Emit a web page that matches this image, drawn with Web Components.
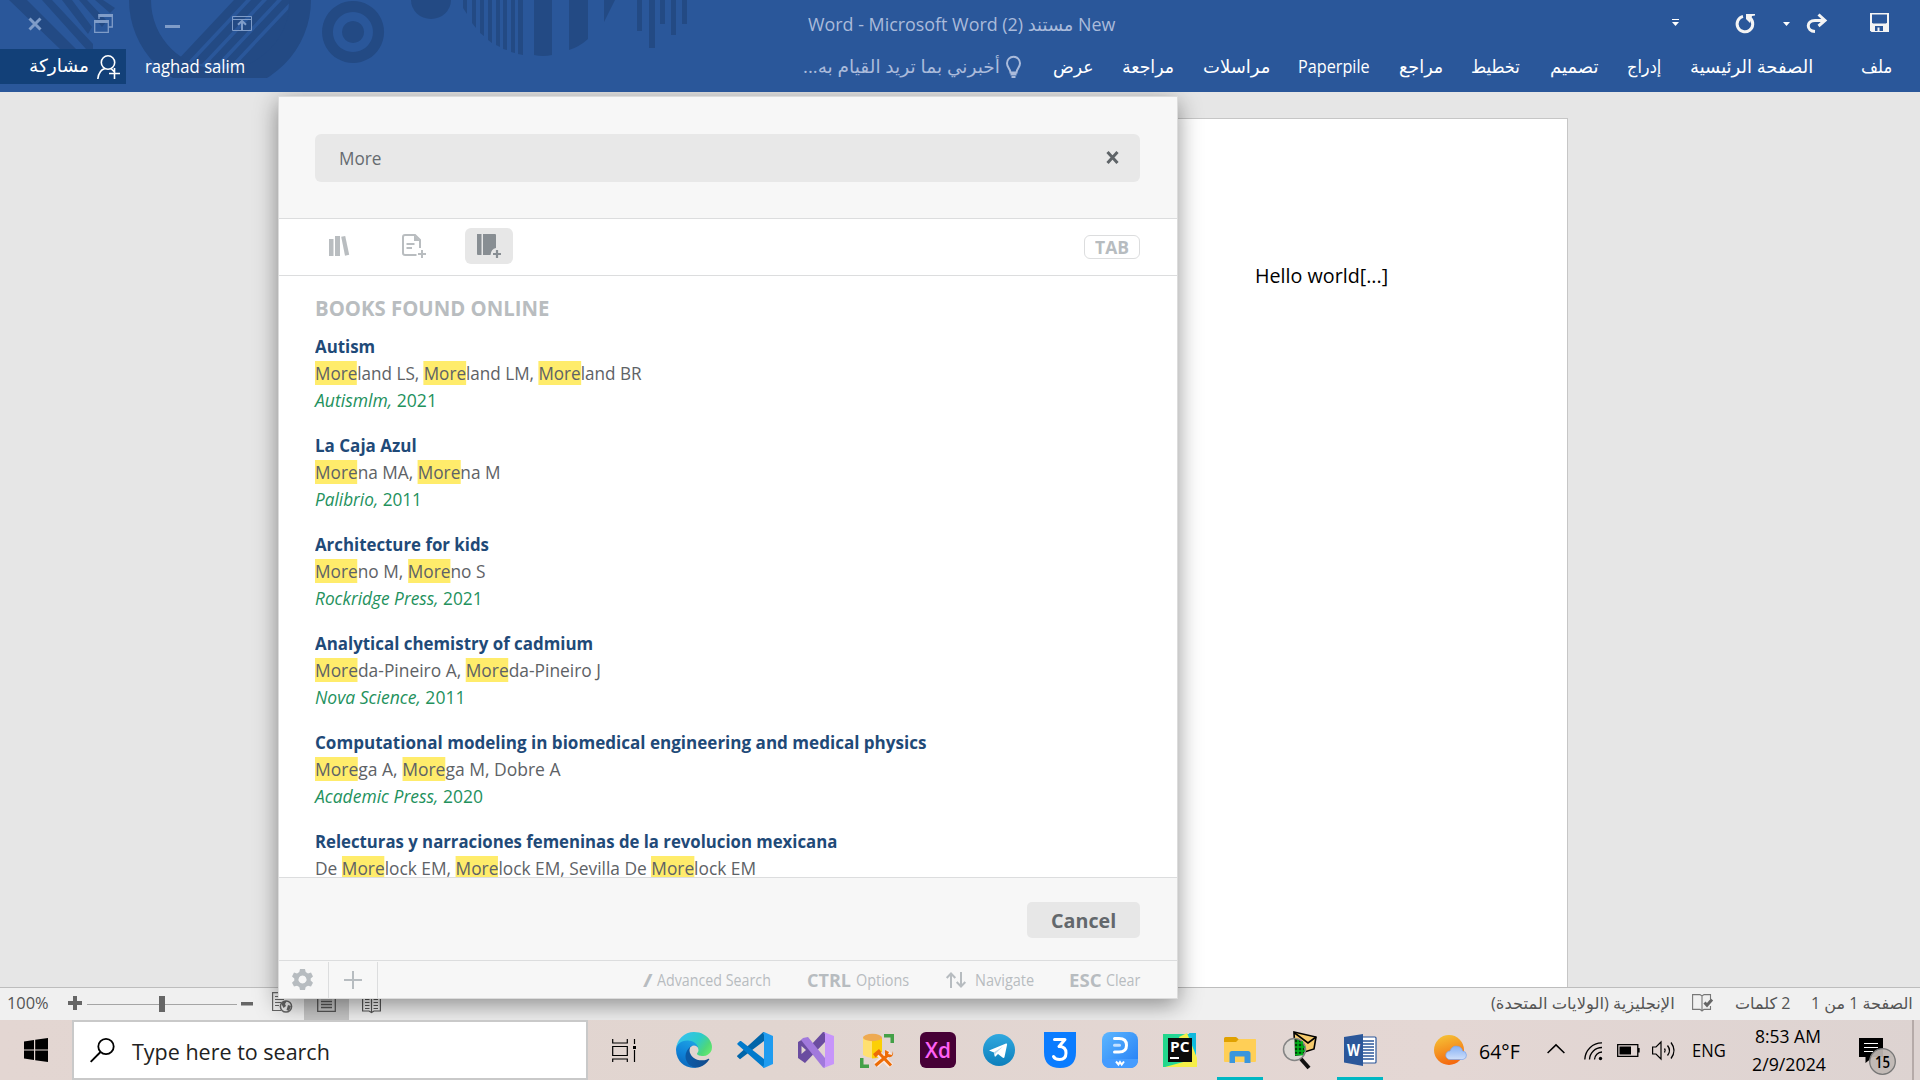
<!DOCTYPE html>
<html lang="ar">
<head>
<meta charset="utf-8">
<title>Word</title>
<style>
html,body{margin:0;padding:0}
body{width:1920px;height:1080px;overflow:hidden;font-family:"Open Sans","DejaVu Sans",sans-serif;background:#e6e6e6}
</style>
</head>
<body>
<desktop-screen></desktop-screen>
<script>
/* Single line of text set to a fixed measure: w = width, s = size, g = leading gap, dy = baseline shift */
class UiText extends HTMLElement{
  connectedCallback(){
    if(this.shadowRoot)return;
    const a=n=>this.getAttribute(n);
    const r=this.attachShadow({mode:'open'});
    r.innerHTML=`<style>
      :host{display:block;flex:none;direction:ltr;text-align:left;white-space:nowrap;width:${a('w')}px;height:${a('h')||24}px;margin-left:${a('g')||0}px;font-size:${a('s')||18}px;line-height:${a('h')||24}px}
      span{display:inline-block;transform-origin:0 50%;vertical-align:top;line-height:inherit}
    </style><span dir="${a('d')||'ltr'}"><slot></slot></span>`;
    const s=r.querySelector('span');
    const fit=()=>{const n=s.offsetWidth;if(n)s.style.transform=`translateY(${a('dy')||0}px) scaleX(${(+a('w'))/n})`};
    requestAnimationFrame(fit);fit();
  }
}
customElements.define('ui-text',UiText);

const ICONS={
close:`<path d="M1.500 1.500 12.500 12.500M12.500 1.500 1.500 12.500" stroke="#7f9cc8" stroke-width="3" fill="none"/>`,
restore:`<path d="M5 5V.7H18.300V13H14" fill="none" stroke="#7f9cc8" stroke-width="1.300"/><path d="M4.500 0H19V3H4.500zM0 6H15V9H0z" fill="#7f9cc8"/><path d="M.7 6.700H14.300V18.300H.7z" fill="none" stroke="#7f9cc8" stroke-width="1.300"/>`,
min:`<path d="M0 0H15V3H0z" fill="#7f9cc8"/>`,
ribbon:`<path d="M.5.5H19.500V14.500H.500zM.5 3.500H19.500" fill="none" stroke="#7f9cc8"/><path d="M10 14V5M6 8.800 10 4.800 14 8.800" fill="none" stroke="#7f9cc8" stroke-width="2"/>`,
down2:`<path d="M0 .5H7" stroke="#fff"/><path d="M0 3H7L3.500 7z" fill="#fff"/>`,
down:`<path d="M0 0H7L3.500 4z" fill="#fff"/>`,
undo:`<path d="M8 2.400A7.800 7.800 0 1 0 15.200 4.200" fill="none" stroke="#f4f4f4" stroke-width="3"/><path d="M11 0H20V1.500L17 2 15 9 11 5z" fill="#f4f4f4"/>`,
redo:`<path d="M9 17.500C0 17 0 6.500 9 6.500H18" fill="none" stroke="#f4f4f4" stroke-width="3"/><path d="M12.500.5 19 6.500 12.500 12" fill="none" stroke="#f4f4f4" stroke-width="3"/>`,
save:`<path d="M0 0H19V19H1.500L0 17.500z" fill="#f4f4f4"/><path d="M2 1.500H17V9.500L16 10.500H3L2 9.500z" fill="#2a579a"/><path d="M5 13H13V18H9.500V14.500H7.500V18H5z" fill="#2a579a"/>`,
share:`<circle cx="11" cy="7.500" r="6.700" fill="none" stroke="#fff" stroke-width="1.600"/><path d="M.8 24C1.500 18 4 14.500 8 13.500M14 13.500 17 16.500M17.500 13V24M12 18.500H23" fill="none" stroke="#fff" stroke-width="1.600"/>`,
bulb:`<path d="M4.500 16.500C4.500 12.500 1 12 1 7.200A6.500 6.500 0 0 1 14 7.200C14 12 10.500 12.500 10.500 16.500zM4.500 18.500H10.500M5.500 21H9.500" fill="none" stroke="#aabbdb" stroke-width="2"/>`,
x:`<path d="M1.500 1 11.500 12M11.500 1 1.500 12" stroke="#5f6468" stroke-width="3"/>`,
library:`<path d="M0 3H4.500V20H0zM6 0H11V20H6z" fill="#b9bdc0"/><path d="M12.200.8 16.200 0 20.200 18.800 16 19.800z" fill="#b9bdc0"/>`,
docplus:`<path d="M14.500 21H3Q1 21 1 19V3Q1 1 3 1H13L18 6V14" fill="none" stroke="#b9bdc0" stroke-width="2"/><path d="M12 1V7H18z" fill="#b9bdc0"/><path d="M4.500 10H12.500M4.500 14H10M20 16V24M16 20H24" stroke="#b9bdc0" stroke-width="2"/>`,
bookplus:`<path d="M0 0H4.500V21H1Q0 21 0 20zM6 0H18Q19 0 19 1V14Q14 15 13.500 21H6z" fill="#888e93"/><path d="M20 16V24M16 20H24" stroke="#888e93" stroke-width="2.200"/>`,
gear:`<path d="M8 0H13L13.700 3.100 16 4.400 19 3.400 21 7.400 18.700 9.600V11.600L21 13.700 19 17.600 16 16.700 13.700 18 13 21H8L7.300 18 5 16.700 2 17.600 0 13.700 2.300 11.600V9.600L0 7.400 2 3.400 5 4.400 7.300 3.100zM10.500 6.500A4 4 0 1 0 10.501 6.500z" fill="#b7bcc0" fill-rule="evenodd"/>`,
plus:`<path d="M9 0V18M0 9H18" stroke="#b7bcc0" stroke-width="2"/>`,
updown:`<path d="M5 16V1.500M.7 6 5 1.500 9.300 6M15 0V14.500M10.700 10 15 14.500 19.300 10" fill="none" stroke="#b7bcc0" stroke-width="2"/>`,
zplus:`<path d="M5 0H9V5H14V9H9V14H5V9H0V5H5z" fill="#666"/>`,
zminus:`<path d="M0 0H12V3.500H0z" fill="#666"/>`,
web:`<path d="M9 18.500H.6V.6H14.500V7M3 4.500H12M3 7.500H12M3 10.500H9M3 13.500H7" fill="none" stroke="#666" stroke-width="1.200"/><circle cx="14" cy="14.500" r="5.600" fill="#f0f0f0" stroke="#666" stroke-width="1.500"/><path d="M9.500 12Q12 8 14.500 9.500L13 12 14 14 11.500 16zM16 13 19 14 17 19 14.500 18z" fill="#666"/>`,
print:`<path d="M.7.7H18.300V17.300H.7zM4 4.500H15M4 7.500H15M4 10.500H15M4 13.500H15" fill="none" stroke="#555" stroke-width="1.300"/>`,
read:`<path d="M9.500 2V18M.6 1H7L9.500 2.500 12 1H18.400V16H12L9.500 17.500 7 16H.6zM3 4.500H7.500M3 7.500H7.500M3 10.500H7.500M3 13.500H7.500M11.500 4.500H16M11.500 7.500H16M11.500 10.500H16M11.500 13.500H16" fill="none" stroke="#555" stroke-width="1.200"/>`,
proof:`<path d="M10 2V17M10 2 8 .6H.6V15.400H8L10 17M10 2 12 .6H18.500V5M18.500 12V15.400H12L10 17" fill="none" stroke="#777" stroke-width="1.100"/><path d="M12.500 8.500 15 11.200 20 5.500" fill="none" stroke="#666" stroke-width="3"/>`,
win:`<path d="M0 3.400 10 2V11.400H0zM11.200 1.800 24 0V11.400H11.200zM0 12.600H10V22L0 20.600zM11.200 12.600H24V24L11.200 22.200z" fill="#000"/>`,
search:`<circle cx="16" cy="8.500" r="7.700" fill="none" stroke="#000" stroke-width="1.800"/><path d="M10.500 14 .7 23.800" stroke="#000" stroke-width="1.900"/>`,
task:`<path d="M.7 0V4H15.300V0M.7 7.500H15.300V16.500H.7zM.7 23V20H15.300V23M22.500 0V5M22.500 11V23" fill="none" stroke="#000" stroke-width="1.200"/><path d="M21 7H24V10H21z" fill="#000"/>`,
edge:`<defs><linearGradient id="a" x1=".2" y1=".8" x2="1" y2=".8"><stop offset="0" stop-color="#0c59a4"/><stop offset="1" stop-color="#114a8b"/></linearGradient><linearGradient id="b" x1=".6" y1=".1" x2=".3" y2="1"><stop offset="0" stop-color="#1b9de2"/><stop offset=".5" stop-color="#0f82d8"/><stop offset="1" stop-color="#0a66b8"/></linearGradient><linearGradient id="c" x1="0" y1=".3" x2="1" y2=".8"><stop offset="0" stop-color="#35c1f1"/><stop offset=".5" stop-color="#2ccbcb"/><stop offset=".8" stop-color="#4fd77a"/><stop offset="1" stop-color="#66eb6e"/></linearGradient></defs><g transform="scale(.1406) translate(-4.630 -4.920)"><path fill="url(#a)" d="M235.680 195.460a93.730 93.730 0 0 1-10.540 4.710 101.870 101.870 0 0 1-35.900 6.460c-47.320 0-88.540-32.550-88.540-74.320A31.480 31.480 0 0 1 117.130 105c-42.800 1.800-53.800 46.400-53.800 72.530 0 73.880 68.090 81.370 82.760 81.370 7.910 0 19.840-2.300 27-4.560l1.310-.44a128.340 128.340 0 0 0 66.600-52.800 4 4 0 0 0-5.320-5.640z"/><path fill="url(#b)" d="M110.340 246.340A79.200 79.200 0 0 1 87.600 225a80.720 80.720 0 0 1 29.530-120c3.120-1.470 8.450-4.130 15.540-4a32.350 32.350 0 0 1 25.690 13 31.880 31.880 0 0 1 6.360 18.660c0-.21 24.460-79.600-80-79.600-43.900 0-80 41.660-80 78.210a130.150 130.150 0 0 0 12.110 56 128 128 0 0 0 156.380 67.110 75.550 75.550 0 0 1-62.780-8z"/><path fill="url(#c)" d="M156.940 153.780c-.81 1.050-3.300 2.500-3.300 5.660 0 2.610 1.700 5.120 4.720 7.230 14.380 10 41.490 8.680 41.560 8.680a59.560 59.560 0 0 0 30.270-8.350 61.380 61.380 0 0 0 30.430-52.880c.26-22.410-8-37.310-11.340-43.910C228.090 28.760 182.350 4.920 132.610 4.920a128 128 0 0 0-128 126.200c.48-36.540 36.800-66.050 80-66.050 3.500 0 23.460.34 42 10.070 16.340 8.580 24.900 18.940 30.850 29.210 6.180 10.670 7.280 24.150 7.280 29.520s-2.740 13.330-7.800 19.910z"/></g>`,
vscode:`<path d="M0 24.500 3 27.200 27 9V0L26 .3 1.500 22.500Q0 23.500 0 24.500z" fill="#0065a9"/><path d="M.3 11.500 3 9 4 9 27 27V36L1 13Q0 12.300.3 11.500z" fill="#007acc"/><path d="M27 0 36 4V32L27 36Q26.500 35.800 26 35L27 33V3L26 1Z" fill="#1f9cf0"/>`,
vs:`<path d="M0 10 6.500 6 13 13 25 0H27V10L7 31 0 26zM3.500 14V22L8 18z" fill="#6a4ca0" fill-rule="evenodd"/><path d="M5 6 10 5 27 26V36L25 35.500 3 8z" fill="#a179dc"/><path d="M25.500 0 36 4V32L25.500 36 27 34V2z" fill="#c795fa"/>`,
db:`<path d="M3 4V22Q12 28 21 22V4z" fill="#ffe071"/><path d="M12 5H22V23Q17 25.500 12 25.500z" fill="#fccf05"/><ellipse cx="12.500" cy="4.500" rx="9.500" ry="3.700" fill="#eeaa52"/><path d="M24 1H34V10H30.500V4.500H24zM0 25H3.500V31.500H9V35H0z" fill="#43a047"/><path d="M16 32 30 19M18 20 31 33" stroke="#fae8e0" stroke-width="6"/><path d="M15.500 32.500 28 22M19 20 31 32.500" stroke="#ed6c05" stroke-width="3"/><path d="M13 21 19 16 21.500 19 15.500 24.500zM25 17 29 19 28 21 32 22 33 18Q34 25 28 24L25 22z" fill="#ed6c05"/>`,
xd:`<rect width="36" height="36" rx="6" fill="#470137"/><text x="18" y="26" text-anchor="middle" font-family="Open Sans,sans-serif" font-weight="600" font-size="21" textLength="26" lengthAdjust="spacingAndGlyphs" fill="#ff61f6">Xd</text>`,
telegram:`<defs><linearGradient id="t" x1="0" y1="0" x2="0" y2="1"><stop stop-color="#30a8df"/><stop offset="1" stop-color="#0d7fbc"/></linearGradient></defs><circle cx="16" cy="16" r="16" fill="url(#t)"/><path d="M6 16.500 23 9.500Q24.500 9 24 11L21.500 23Q21 24.500 19.500 23.500L15 20 12.500 22.500Q11.500 23 11.500 21.500L11 18.500z" fill="#fff"/><path d="M11.500 21.500 13 19 20 12.500 11 18.300z" fill="#b8d8ec"/>`,
three:`<path d="M0 0H32V20Q32 36 16 36T0 20z" fill="#0a7cff"/><path d="M10.500 7.500H21L15 14.500Q22 14.500 22 21T15.500 27.500Q11 27.500 9.500 24.500" fill="none" stroke="#fff" stroke-width="3" stroke-linecap="round" stroke-linejoin="round"/>`,
edraw:`<defs><linearGradient id="e" x1="0" y1="0" x2="1" y2="1"><stop stop-color="#5cb6ff"/><stop offset="1" stop-color="#247ef5"/></linearGradient></defs><rect width="36" height="36" rx="8" fill="url(#e)"/><path d="M0 27H36V29Q35 36 28 36H8Q1 36 0 29z" fill="#459cff"/><path d="M12.500 6.500H17Q24.500 6.500 24.500 13.200T17 20H12.500" fill="none" stroke="#fff" stroke-width="3" stroke-linecap="round"/><path d="M12.500 13.300H17.500" stroke="#c3e0ff" stroke-width="3" stroke-linecap="round"/><path d="M14 29.500 16.500 32.500 18 30 19.700 32.500 22 29.500" fill="none" stroke="#fff" stroke-width="2"/>`,
pycharm:`<defs><linearGradient id="p" x1="0" y1=".2" x2="1" y2=".2"><stop stop-color="#21d789"/><stop offset=".6" stop-color="#27d7a0"/><stop offset="1" stop-color="#07c3f2"/></linearGradient></defs><path d="M0 1H33V34H0z" fill="url(#p)"/><path d="M16 4 24 0 34 25V34H2L24 28z" fill="#f5ee48"/><path d="M26 0H33V18z" fill="#10b9dd"/><path d="M5 5H29V29H5z" fill="#0b0b0b"/><text x="7" y="18.500" font-family="Open Sans,sans-serif" font-weight="700" font-size="14" textLength="19.500" lengthAdjust="spacingAndGlyphs" fill="#fff">PC</text><path d="M7 24H16V26H7z" fill="#fff"/>`,
folder:`<path d="M0 1.500Q0 0 1.500 0H12L15 2.500 13 6H0z" fill="#e0a100"/><path d="M0 5H12L15 2H31.500Q32 2 32 3V24Q32 25 31 25H1Q0 25 0 24z" fill="#ffcf56"/><path d="M5.500 26V16.500Q5.500 14 8 14H24Q26.500 14 26.500 16.500V26H20.500V19.500H11V26z" fill="#3a96dd"/>`,
mail:`<path d="M11 0 33 5 31 17 12 23z" fill="#f5ca6c" stroke="#000" stroke-width="1.600"/><path d="M11 .5 25 11 33 5" fill="none" stroke="#000" stroke-width="1.600"/><circle cx="11.500" cy="17.500" r="11" fill="#dcd8d4" stroke="#858585" stroke-width="1.500"/><path d="M11.500 7A10.500 10.500 0 0 1 20 23L12 24z" fill="#003d08"/><path d="M12 11H20M12 15H22M12 19H22M12 22.500H20M15 8V23M19 9V22" stroke="#00b91c" stroke-width="1.500"/><path d="M18 27 26 36" stroke="#111" stroke-width="4"/>`,
word:`<path d="M16 3H31Q32 3 32 4V28Q32 29 31 29H16z" fill="#fff" stroke="#2b579a" stroke-width="1.200"/><path d="M19 7H30M19 10H30M19 13H30M19 16H30M19 19H30M19 22H30M19 25H30" stroke="#2b579a" stroke-width="1.400"/><path d="M0 3 19 0V32L0 28.500z" fill="#2b579a"/><text x="3" y="22" font-family="Open Sans,sans-serif" font-weight="700" font-size="15.500" textLength="13" lengthAdjust="spacingAndGlyphs" fill="#fff">W</text>`,
weather:`<defs><linearGradient id="w" x1=".3" y1="0" x2=".6" y2="1"><stop stop-color="#f5c035"/><stop offset="1" stop-color="#f4640d"/></linearGradient><linearGradient id="k" x1="0" y1="0" x2="0" y2="1"><stop stop-color="#86b1f4"/><stop offset="1" stop-color="#cfdffa"/></linearGradient></defs><circle cx="15" cy="15" r="15" fill="url(#w)"/><path d="M16 24.500A4.200 4.200 0 0 1 16 16Q18 10.500 23 11.200T28.500 16A4.300 4.300 0 0 1 29 24.500z" fill="url(#k)" stroke="#7da4e8" stroke-width=".7"/>`,
chev:`<path d="M.6 9 9 .9 17.400 9" fill="none" stroke="#000" stroke-width="1.500"/>`,
wifi:`<path d="M.8 17.500A17 17 0 0 1 18 .9M5.500 17.500A12.500 12.500 0 0 1 18 5.500M10.500 17.500A8 8 0 0 1 18 10" fill="none" stroke="#000" stroke-width="1.300"/><circle cx="16.500" cy="16.500" r="1.700"/>`,
batt:`<path d="M.7.7H20.800V12.300H.7zM22 4V8.500" fill="none" stroke="#000" stroke-width="1.300"/><path d="M2.500 2.500H14V10.500H2.500z"/>`,
vol:`<path d="M.6 6H4L9 1V18L4 13H.6z" fill="none" stroke="#000" stroke-width="1.200"/><path d="M12.500 7.500Q14 9.500 12.500 11.500M15.500 4.500Q19.500 9.500 15.500 14.500M19 1.500Q25 9.500 19 17.500" fill="none" stroke="#000" stroke-width="1.300"/>`,
note:`<path d="M0 0H24V19H14L6.500 25V19H0z" fill="#000"/><path d="M5 5.500H19M5 9.500H19M5 13.500H14" stroke="#fff" stroke-width="1.200"/><circle cx="23.500" cy="23.500" r="12.800" fill="#bfb8b4" fill-opacity=".93" stroke="#777" stroke-width="1.300"/><text x="23.500" y="29.500" text-anchor="middle" font-family="Open Sans,sans-serif" font-size="16" font-weight="600" textLength="15" lengthAdjust="spacingAndGlyphs">15</text>`
};
class UiIcon extends HTMLElement{
  connectedCallback(){
    if(this.shadowRoot)return;
    const a=n=>this.getAttribute(n),w=a('w'),h=a('h');
    this.attachShadow({mode:'open'}).innerHTML=`<style>:host{display:block;flex:none;width:${w}px;height:${h}px;margin-left:${a('g')||0}px;margin-top:${a('mt')||0}px}svg{display:block;overflow:visible}</style><svg width="${w}" height="${h}" viewBox="0 0 ${w} ${h}">${ICONS[a('n')]}</svg>`;
  }
}
customElements.define('ui-icon',UiIcon);

function define(name,html){
  const t=document.createElement('template');t.innerHTML=html;
  customElements.define(name,class extends HTMLElement{
    connectedCallback(){if(!this.shadowRoot)this.attachShadow({mode:'open'}).append(t.content.cloneNode(true))}
  });
}

define('title-art',`<style>:host{display:block}svg{display:block}</style>
<svg width="720" height="92" fill="#234a84"><defs><clipPath id="r"><path d="M0 0H720V78H0z"/></clipPath><clipPath id="in"><circle cx="220" cy="0" r="70"/></clipPath></defs>
<path d="M9 0H27L76 49H60zM42 0H52L93 44V49H86zM62 0H72L92 27 88 34zM79 0H87L107 21 102 27zM95 0H103L115 8 110 13z"/>
<g clip-path="url(#r)"><path fill-rule="evenodd" d="M129 0A91 91 0 0 0 311 0H289A69 69 0 0 1 151 0z"/></g>
<g clip-path="url(#in)"><path d="M234 0H246L186 64H174zM251 0H262L202 64H191zM267 0H277L217 64H207zM282 0H292L232 64H222zM297 0H320L260 64H237z"/></g>
<path fill-rule="evenodd" d="M353 1a31 31 0 1 0 .1 0zM353 12a20 20 0 1 1-.1 0zM353 21a11 11 0 1 0 .1 0z"/>
<path d="M411 0H451A20 19 0 0 1 411 0zM463 0H467V14L463 8zM472 0H476V28L472 23zM480 0H484V36L480 33zM488 0H492V43L488 40zM496 0H500V47L496 45zM503 0H507V50L503 49zM511 0H515V53L511 52zM518 0H523V55L518 54zM534 0H552V55Q543 57 534 55zM569 0H588V39Q579 47 569 50zM604 0H615L604 22zM637 0H642V31H637zM649 0H655V48H649zM660 0H665V24H660zM671 0H676V35H671zM682 0H687V24H682z"/></svg>`);

define('title-bar',`<style>
:host{display:block;position:relative;height:92px;background:#2a579a;color:#fff}
title-art{position:absolute;left:0;top:0}
.row{position:relative;display:flex;align-items:center}
.a{height:47px}.b{height:35px;margin-top:2px}
.share{display:flex;align-items:center;width:126px;height:35px;background:#124078}
.dim{color:#aabbdb}
</style>
<title-art></title-art>
<div class="row a">
<ui-icon n="close" w="14" h="14" g="28"></ui-icon><ui-icon n="restore" w="19" h="19" g="52"></ui-icon><ui-icon n="min" w="15" h="3" g="52" mt="6"></ui-icon><ui-icon n="ribbon" w="20" h="15" g="52" mt="-1"></ui-icon>
<ui-text class="dim" g="556" w="307">Word - Microsoft Word (2) مستند New</ui-text>
<ui-icon n="down2" w="7" h="7" g="557" mt="-2"></ui-icon><ui-icon n="undo" w="20" h="19" g="56"></ui-icon><ui-icon n="down" w="7" h="4" g="28"></ui-icon><ui-icon n="redo" w="21" h="19" g="16"></ui-icon><ui-icon n="save" w="19" h="19" g="43" mt="-2"></ui-icon>
</div>
<div class="row b">
<div class="share"><ui-text g="29" w="60" d="rtl" dy="-2">مشاركة</ui-text><ui-icon n="share" w="23" h="24" g="8"></ui-icon></div>
<ui-text g="19" w="100" dy="-1">raghad salim</ui-text>
<ui-text class="dim" g="558" w="197" d="rtl" dy="-1">أخبرني بما تريد القيام به...</ui-text>
<ui-icon n="bulb" w="15" h="22" g="6"></ui-icon>
<ui-text g="32" w="40" d="rtl" dy="-1">عرض</ui-text>
<ui-text g="29" w="52" d="rtl" dy="-1">مراجعة</ui-text>
<ui-text g="29" w="67" d="rtl" dy="-1">مراسلات</ui-text>
<ui-text g="28" w="72" dy="-1">Paperpile</ui-text>
<ui-text g="29" w="44" d="rtl" dy="-1">مراجع</ui-text>
<ui-text g="28" w="49" d="rtl" dy="-1">تخطيط</ui-text>
<ui-text g="30" w="48" d="rtl" dy="-1">تصميم</ui-text>
<ui-text g="29" w="34" d="rtl" dy="-1">إدراج</ui-text>
<ui-text g="29" w="123" d="rtl" dy="-1">الصفحة الرئيسية</ui-text>
<ui-text g="48" w="31" d="rtl" dy="-1">ملف</ui-text>
</div>`);

class BookItem extends HTMLElement{
  connectedCallback(){
    if(this.shadowRoot)return;
    const a=n=>this.getAttribute(n);
    const au=a('authors').replace(/More/g,'<mark>More</mark>');
    this.attachShadow({mode:'open'}).innerHTML=`<style>
    :host{display:block;height:99px}
    .t{font-weight:700;color:#1f4a78}.a{color:#5e6266}.p{color:#23915d}
    mark{background:#ffec6b;color:inherit;display:inline-block;height:24px;line-height:24px;vertical-align:top;margin-top:1px}
    </style>
    <ui-text class="t" h="27" w="${a('tw')}">${a('name')}</ui-text>
    <ui-text class="a" h="27" w="${a('aw')}">${au}</ui-text>
    ${a('pub')?`<ui-text class="p" h="27" w="${a('pw')}"><i>${a('pub')},</i> ${a('year')}</ui-text>`:''}`;
  }
}
customElements.define('book-item',BookItem);

define('cite-dialog',`<style>
:host{display:flex;flex-direction:column;box-sizing:border-box;width:900px;height:903px;background:#fff;border:1px solid #dcdcdc;box-shadow:0 6px 22px rgba(0,0,0,.42)}
.top,.tabs,.list,.act{flex:none}
.top{height:122px;box-sizing:border-box;padding:37px 37px 0 36px;background:#f7f7f7;border-bottom:1px solid #dcddde}
.in{display:flex;align-items:center;height:48px;border-radius:6px;background:#e8e8e8;color:#666b70}
.tabs{display:flex;align-items:center;height:57px;box-sizing:border-box;border-bottom:1px solid #dcddde;padding-bottom:2px}
.on{display:flex;width:48px;height:36px;border-radius:6px;background:#e7e7e7;margin-left:39px;margin-top:-1px}
.key{display:flex;align-items:center;box-sizing:border-box;width:56px;height:24px;border:1px solid #dcddde;border-radius:6px;margin-left:571px;color:#b7bcc0;font-weight:700;margin-top:1px}
.list{height:601px;overflow:hidden;padding-left:36px}
.h{font-weight:700;color:#b9bdc0;margin:17px 0 10px}
.act{height:83px;box-sizing:border-box;border-top:1px solid #dcddde;background:#f7f7f7;display:flex;padding:24px 37px 0 0;justify-content:flex-end}
.btn{display:flex;align-items:center;width:113px;height:36px;border-radius:5px;background:#e7e7e7;color:#63686c;font-weight:700}
.foot{display:flex;align-items:center;height:38px;box-sizing:border-box;flex:none;border-top:1px solid #dcddde;background:#f7f7f7;color:#b7bcc0}
.c{display:flex;align-items:center;justify-content:center;box-sizing:border-box;height:36px;border-right:1px solid #dcddde;margin-top:1px;padding-bottom:1px}
b{font-weight:700}
</style>
<div class="top"><div class="in"><ui-text g="24" w="42">More</ui-text><ui-icon n="x" w="13" h="13" g="725" mt="-1"></ui-icon></div></div>
<div class="tabs"><ui-icon n="library" w="20" h="20" g="50"></ui-icon><ui-icon n="docplus" w="24" h="24" g="53"></ui-icon><div class="on"><ui-icon n="bookplus" w="24" h="24" g="12" mt="6"></ui-icon></div><div class="key"><ui-text g="10" w="34">TAB</ui-text></div></div>
<div class="list"><div class="h"><ui-text s="20.500" h="30" w="234">BOOKS FOUND ONLINE</ui-text></div>
<book-item name="Autism" tw="60" authors="Moreland LS, Moreland LM, Moreland BR" aw="327" pub="Autismlm" year="2021" pw="122"></book-item>
<book-item name="La Caja Azul" tw="102" authors="Morena MA, Morena M" aw="186" pub="Palibrio" year="2011" pw="107"></book-item>
<book-item name="Architecture for kids" tw="174" authors="Moreno M, Moreno S" aw="170" pub="Rockridge Press" year="2021" pw="168"></book-item>
<book-item name="Analytical chemistry of cadmium" tw="278" authors="Moreda-Pineiro A, Moreda-Pineiro J" aw="286" pub="Nova Science" year="2011" pw="150"></book-item>
<book-item name="Computational modeling in biomedical engineering and medical physics" tw="611" authors="Morega A, Morega M, Dobre A" aw="246" pub="Academic Press" year="2020" pw="168"></book-item>
<book-item name="Relecturas y narraciones femeninas de la revolucion mexicana" tw="522" authors="De Morelock EM, Morelock EM, Sevilla De Morelock EM" aw="441"></book-item>
</div>
<div class="act"><div class="btn"><ui-text s="20" h="30" g="24" w="65" dy="1">Cancel</ui-text></div></div>
<div class="foot"><div class="c" style="width:50px"><ui-icon n="gear" w="21" h="21" g="-2"></ui-icon></div><div class="c" style="width:49px"><ui-icon n="plus" w="18" h="18"></ui-icon></div>
<ui-text g="265" w="9"><b>/</b></ui-text><ui-text g="5" w="114" s="15.500" dy="-.5">Advanced Search</ui-text>
<ui-text g="36" w="44"><b>CTRL</b></ui-text><ui-text g="5" w="53" s="15.500" dy="-.5">Options</ui-text>
<ui-icon n="updown" w="20" h="16" g="37"></ui-icon><ui-text g="9" w="59" s="15.500" dy="-.5">Navigate</ui-text>
<ui-text g="35" w="32"><b>ESC</b></ui-text><ui-text g="5" w="34" s="15.500" dy="-.5">Clear</ui-text>
</div>`);

define('doc-page',`<style>:host{display:block;box-sizing:border-box;width:614px;height:869px;background:#fff;border:1px solid #c6c6c6;border-bottom:0;padding:144px 0 0 300px;color:#000}</style><ui-text s="20" h="26" w="133">Hello world[...]</ui-text>`);

define('status-bar',`<style>
:host{display:flex;align-items:center;box-sizing:border-box;height:33px;border-top:1px solid #bdbdbd;background:#f0f0f0;color:#555}
.line{display:flex;align-items:center;width:150px;height:1px;background:#a5a5a5;margin-left:5px}
.th{width:6px;height:16px;background:#666;margin-left:72px}
.sel{display:flex;width:45px;height:32px;background:#c6c6c6;margin-left:12px}
</style>
<ui-text s="16" g="7" w="42" dy="-1">100%</ui-text><ui-icon n="zplus" w="14" h="14" g="19" mt="-2"></ui-icon><div class="line"><div class="th"></div></div><ui-icon n="zminus" w="12" h="3" g="4" mt="-2"></ui-icon>
<ui-icon n="web" w="20" h="20" g="19" mt="-4"></ui-icon><div class="sel"><ui-icon n="print" w="19" h="18" g="13" mt="6"></ui-icon></div><ui-icon n="read" w="19" h="18" g="13" mt="-1"></ui-icon>
<ui-text s="16" g="1110" w="184" d="rtl" dy="-1">الإنجليزية (الولايات المتحدة)</ui-text>
<ui-icon n="proof" w="21" h="17" g="17" mt="-3"></ui-icon>
<ui-text s="16" g="22" w="55" d="rtl" dy="-1">2 كلمات</ui-text>
<ui-text s="16" g="21" w="102" d="rtl" dy="-1">الصفحة 1 من 1</ui-text>`);

define('task-bar',`<style>
:host{display:flex;align-items:center;height:60px;background:linear-gradient(90deg,#e3d6d2,#e1d5d0 40%,#e4d7d4 75%,#ddd3d1);color:#000}
.s{display:flex;align-items:center;box-sizing:border-box;width:516px;height:60px;border:2px solid #c9c9c9;background:#fff;margin-left:24px;color:#222}
.app{display:flex;flex-direction:column;align-items:center;justify-content:center;box-sizing:border-box;width:61px;height:60px;flex:none}
.act{box-shadow:inset 0 -3px #00b7c3;width:46px}
.clock{margin-left:26px}
.sep{width:2px;height:60px;background:#b5aaa8;margin-left:17px}
</style>
<ui-icon n="win" w="24" h="24" g="24"></ui-icon>
<div class="s"><ui-icon n="search" w="24" h="24" g="16"></ui-icon><ui-text s="21.500" h="30" g="18" w="198" dy="2">Type here to search</ui-text></div>
<ui-icon n="task" w="24" h="23" g="24"></ui-icon>
<div class="app" style="margin-left:27.500px"><ui-icon n="edge" w="36" h="36"></ui-icon></div>
<div class="app"><ui-icon n="vscode" w="36" h="36"></ui-icon></div>
<div class="app"><ui-icon n="vs" w="36" h="36"></ui-icon></div>
<div class="app"><ui-icon n="db" w="34" h="35"></ui-icon></div>
<div class="app"><ui-icon n="xd" w="36" h="36"></ui-icon></div>
<div class="app"><ui-icon n="telegram" w="32" h="32"></ui-icon></div>
<div class="app"><ui-icon n="three" w="32" h="36"></ui-icon></div>
<div class="app" style="width:59px"><ui-icon n="edraw" w="36" h="36"></ui-icon></div>
<div class="app" style="width:60px"><ui-icon n="pycharm" w="34" h="34"></ui-icon></div>
<div class="app act" style="margin:0 7px"><ui-icon n="folder" w="32" h="26"></ui-icon></div>
<div class="app" style="width:60px"><ui-icon n="mail" w="34" h="36"></ui-icon></div>
<div class="app act" style="margin:0 7px"><ui-icon n="word" w="32" h="32"></ui-icon></div>
<ui-icon n="weather" w="33" h="30" g="44"></ui-icon>
<ui-text s="20" g="12" w="41" dy="2">64°F</ui-text>
<ui-icon n="chev" w="18" h="10" g="27" mt="-2"></ui-icon>
<ui-icon n="wifi" w="18" h="18" g="19" mt="2"></ui-icon>
<ui-icon n="batt" w="23" h="13" g="15"></ui-icon>
<ui-icon n="vol" w="24" h="19" g="12" mt="1"></ui-icon>
<ui-text s="18" g="16" w="34">ENG</ui-text>
<div class="clock"><ui-text s="18" h="28" g="3" w="66">8:53 AM</ui-text><ui-text s="18" h="28" w="74">2/9/2024</ui-text></div>
<ui-icon n="note" w="36" h="36" g="33" mt="11"></ui-icon><div class="sep"></div>`);

define('desktop-screen',`<style>
:host{display:flex;flex-direction:column;position:relative;width:1920px;height:1080px;overflow:hidden;background:#e6e6e6}
.work{display:flex;height:895px;padding-left:954px;box-sizing:border-box;align-items:flex-end}
title-bar,status-bar,task-bar{flex:none}
task-bar{position:relative;z-index:2}
cite-dialog{position:absolute;left:278px;top:96px;z-index:1}
title-bar{z-index:3}
</style>
<title-bar></title-bar><div class="work"><doc-page></doc-page></div><status-bar></status-bar><task-bar></task-bar><cite-dialog></cite-dialog>`);
</script>
</body>
</html>
